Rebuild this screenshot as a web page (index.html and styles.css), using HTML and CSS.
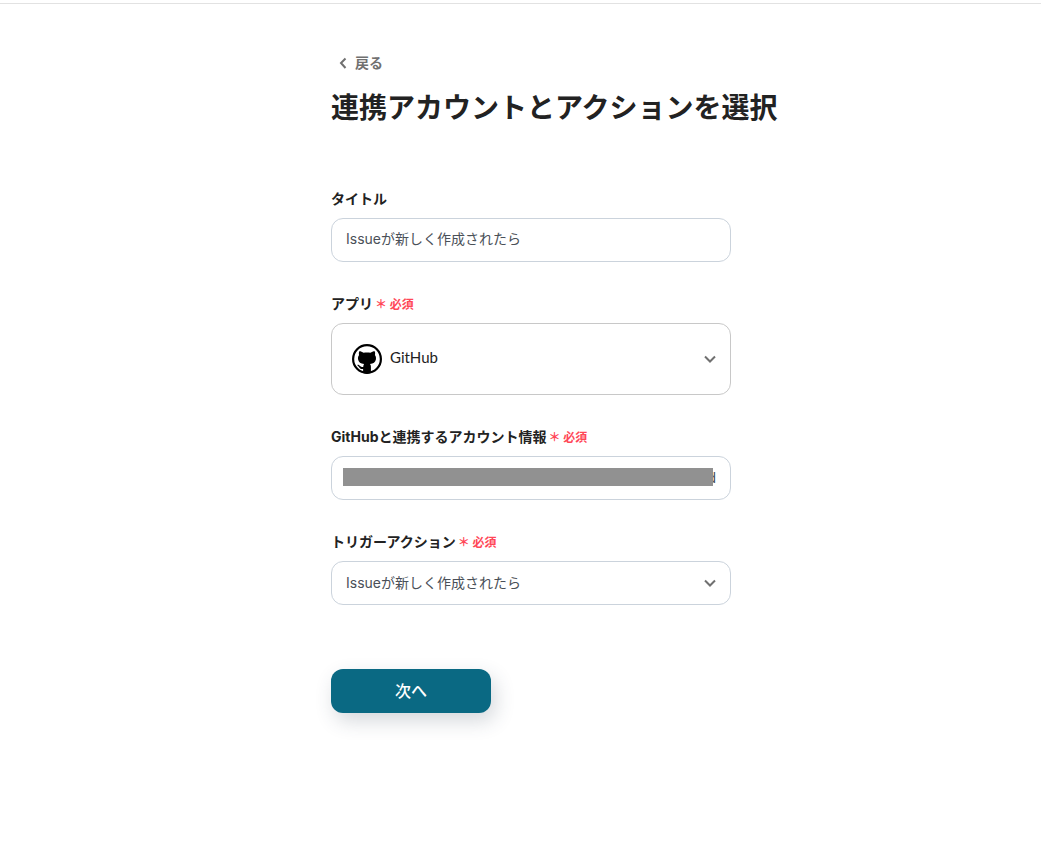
FILE: index.html
```html
<!DOCTYPE html>
<html lang="ja">
<head>
  <meta charset="UTF-8" />
  <title>連携アカウントとアクションを選択</title>
  <meta name="viewport" content="width=device-width, initial-scale=1.0" />
  <link rel="stylesheet" href="styles.css">
</head>
<body>
  <main class="page">
    <a class="back" href="#">
      <svg width="8" height="12" viewBox="0 0 8 12" aria-hidden="true"><path d="M6.500 1.500 2 6l4.500 5" /></svg>
      戻る
    </a>
    <h1>連携アカウントとアクションを選択</h1>

    <form>
      <div class="field">
        <label for="title">タイトル</label>
        <input class="control" type="text" id="title" value="Issueが新しく作成されたら" />
      </div>

      <div class="field">
        <label for="app">アプリ<span class="required">＊ 必須</span></label>
        <div class="select">
          <select class="control control-app" id="app">
            <option>GitHub</option>
          </select>
          <svg class="app-icon" width="30" height="30" viewBox="0 0 30 30" aria-hidden="true">
            <circle cx="15" cy="15" r="13.900" fill="#fff" stroke="#000" stroke-width="2.200" />
            <path d="M7.300 7.200c1.500 0 3 .7 4.300 1.500 2.200-.4 4.600-.4 6.800 0 1.300-.8 2.800-1.500 4.300-1.500.6 1.400.5 2.800.2 3.800 1 1.300 1.300 2.800 1 4.400-.5 2.700-2.600 4.200-5.900 4.600.7.800.9 1.700.9 2.700v6.400c-2.400.7-5.400.7-7.800 0v-4.100c-2.300.3-3.400-.6-4.100-2-.4-.8-.9-1.200-1.500-1.600-.5-.6.500-.9 1.400-.3 1.500 1.100 1.900 2.400 4.300 1.800.1-1 .3-1.800.8-2.900-3.300-.4-5.400-1.900-5.900-4.600-.3-1.600 0-3.100 1-4.400-.3-1-.4-2.400.2-3.800z" />
          </svg>
          <svg class="chevron" width="12" height="8" viewBox="0 0 12 8" aria-hidden="true"><path d="M1 1.500 6 6.500l5-5" /></svg>
        </div>
      </div>

      <div class="field">
        <label for="account">GitHubと連携するアカウント情報<span class="required">＊ 必須</span></label>
        <div class="select">
          <select class="control control-account" id="account">
            <option>d</option>
          </select>
          <span class="mask"></span>
        </div>
      </div>

      <div class="field">
        <label for="trigger">トリガーアクション<span class="required">＊ 必須</span></label>
        <div class="select">
          <select class="control" id="trigger">
            <option>Issueが新しく作成されたら</option>
          </select>
          <svg class="chevron" width="12" height="8" viewBox="0 0 12 8" aria-hidden="true"><path d="M1 1.500 6 6.500l5-5" /></svg>
        </div>
      </div>

      <button class="next" type="button">次へ</button>
    </form>
  </main>
</body>
</html>
```
FILE: styles.css
```css
:root {
  --text: #222;
  --sub: #707070;
  --border: #cbd3dc;
  --accent: #0a6983;
  --required: #ff4757;
}

* {
  box-sizing: border-box;
}

body {
  margin: 0;
  padding-top: 3px;
  font-family: Inter, "Noto Sans CJK JP", sans-serif;
  font-size: 14px;
  color: var(--text);
  background: #fff;
}

.page {
  border-top: 1px solid #e2e2e2;
  padding: 49px 0 48px 21px;
  display: grid;
  grid-template-columns: minmax(0, 400px);
  justify-content: center;
}

.back {
  display: flex;
  align-items: center;
  gap: 8px;
  padding-left: 8px;
  line-height: 20px;
  font-weight: bold;
  color: var(--sub);
  text-decoration: none;
}

svg path {
  fill: none;
}

.back path,
.chevron path {
  stroke: var(--sub);
  stroke-width: 2;
}

h1 {
  margin: 13px 0 59px;
  font-size: 28px;
  line-height: 44px;
  white-space: nowrap;
}

.field {
  margin-bottom: 32px;
}

label {
  display: block;
  margin-bottom: 9px;
  line-height: 20px;
  font-weight: bold;
}

.required {
  margin-left: 2px;
  font-size: 12px;
  line-height: 12px;
  color: var(--required);
}

.control {
  display: block;
  width: 100%;
  height: 44px;
  padding: 0 14px 2px;
  border: 1px solid var(--border);
  border-radius: 12px;
  font: inherit;
  color: #4a5058;
  background: #fff;
  appearance: none;
}

input.control {
  padding-bottom: 4px;
}

.select {
  position: relative;
}

.control-app {
  height: 72px;
  padding-left: 58px;
  padding-bottom: 4px;
  border-color: #c8c8c8;
  font-family: Lato, "Noto Sans CJK JP", sans-serif;
  font-size: 15px;
  color: var(--text);
}

.control-account {
  text-align-last: right;
}

.app-icon {
  position: absolute;
  left: 21px;
  top: 21px;
}

.app-icon path {
  fill: #000;
}

.chevron {
  position: absolute;
  right: 15px;
  top: calc(50% - 4px);
}

.mask {
  position: absolute;
  left: 12px;
  right: 18px;
  top: 12px;
  height: 18px;
  background: #919191;
}

.next {
  display: block;
  width: 160px;
  height: 44px;
  margin-top: 64px;
  padding: 0 0 2px;
  border: 0;
  border-radius: 12px;
  font: inherit;
  font-size: 16px;
  font-weight: 500;
  color: #fff;
  background: var(--accent);
  box-shadow: 4px 8px 20px rgba(44, 62, 80, 0.2);
}
```
